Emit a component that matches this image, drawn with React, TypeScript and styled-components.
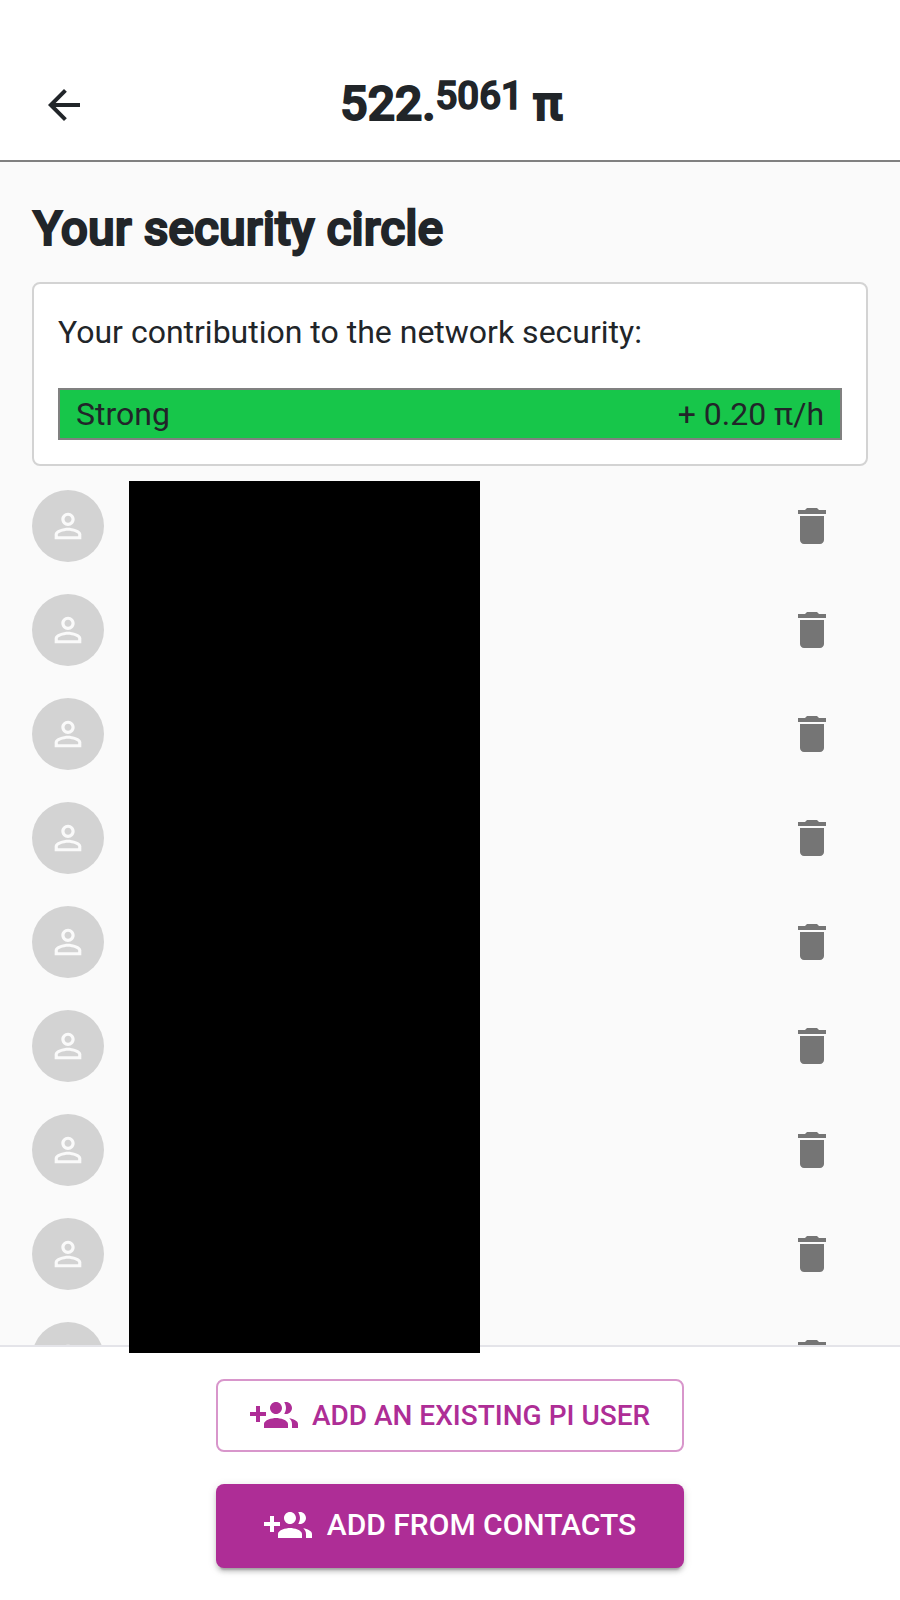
import React from "react";
import styled, { createGlobalStyle } from "styled-components";

const GlobalStyle = createGlobalStyle`
  *, *::before, *::after { box-sizing: border-box; }
  html, body { margin: 0; padding: 0; background: #fff; }
  body { font-family: Roboto, "Liberation Sans", sans-serif; color: #212529; }
`;

const Screen = styled.div`
  position: relative;
  display: flex;
  flex-direction: column;
  width: 900px;
  height: 1600px;
  overflow: hidden;
  background: #fff;
`;

const Header = styled.header`
  display: grid;
  grid-template-columns: 48px 1fr 48px;
  align-items: center;
  flex: none;
  height: 162px;
  padding: 50px 40px 0;
  border-bottom: 2px solid #808080;
`;

const BackButton = styled.button`
  display: flex;
  width: 48px;
  height: 48px;
  padding: 0;
  border: 0;
  background: none;
  color: inherit;
`;

const Balance = styled.h1`
  margin: 0 0 0 3px;
  padding-bottom: 2px;
  font-size: 48px;
  font-weight: 500;
  line-height: 60px;
  text-align: center;
  white-space: nowrap;
  word-spacing: -2px;
  -webkit-text-stroke: 2px currentColor;
`;

const Fraction = styled.span`
  display: inline-block;
  font-size: 0.8em;
  line-height: 40px;
  transform: translateY(-11px);
  -webkit-text-stroke-width: 1.6px;
`;

const Content = styled.main`
  flex: none;
  height: 1183px;
  padding: 38px 32px 0;
  overflow: hidden;
  background: #fafafa;
`;

const Heading = styled.h2`
  margin: 0 0 24px 1px;
  font-size: 48px;
  font-weight: 500;
  line-height: 58px;
  white-space: nowrap;
  -webkit-text-stroke: 2px currentColor;
`;

const Card = styled.section`
  height: 184px;
  margin-bottom: 8px;
  padding: 24px;
  border: 2px solid #d3d3d3;
  border-radius: 8px;
  background: #fff;
  font-size: 32px;
  white-space: nowrap;
`;

const CardLabel = styled.p`
  margin: 0 0 32px;
  line-height: 48px;
`;

const StrengthBar = styled.div`
  display: flex;
  align-items: center;
  justify-content: space-between;
  height: 52px;
  padding: 0 16px;
  border: 2px solid #808080;
  background: #17c64a;
`;

const Members = styled.ul`
  margin: 0;
  padding: 0;
  list-style: none;
`;

const MemberRow = styled.li`
  display: flex;
  align-items: center;
  justify-content: space-between;
  height: 104px;
  padding: 0 32px 0 0;
`;

const Avatar = styled.div`
  display: flex;
  align-items: center;
  justify-content: center;
  width: 72px;
  height: 72px;
  border-radius: 50%;
  background: #d3d3d3;
  color: #fafafa;
`;

const DeleteButton = styled.button`
  display: flex;
  padding: 0;
  border: 0;
  background: none;
  color: #757575;
`;

const Redaction = styled.div`
  position: absolute;
  left: 129px;
  top: 481px;
  width: 351px;
  height: 872px;
  background: #000;
`;

const Footer = styled.footer`
  display: flex;
  flex: 1;
  flex-direction: column;
  align-items: center;
  gap: 32px;
  padding-top: 32px;
  border-top: 2px solid #e4e4e9;
  background: #fff;
`;

const ActionButton = styled.button<{ $filled?: boolean }>`
  display: flex;
  align-items: center;
  justify-content: center;
  gap: ${(p) => (p.$filled ? 15 : 14)}px;
  width: 468px;
  height: ${(p) => (p.$filled ? 84 : 73)}px;
  padding: 0;
  border: ${(p) => (p.$filled ? "0" : "2px solid #d896cb")};
  border-radius: 8px;
  background: ${(p) => (p.$filled ? "#ae2d96" : "#fff")};
  color: ${(p) => (p.$filled ? "#fff" : "#ae2d96")};
  font-family: inherit;
  font-size: ${(p) => (p.$filled ? 30 : 28)}px;
  font-weight: 500;
  text-transform: uppercase;
  white-space: nowrap;
  box-shadow: ${(p) =>
    p.$filled
      ? "0 6px 2px -4px rgba(0,0,0,.2), 0 4px 4px rgba(0,0,0,.14), 0 2px 10px rgba(0,0,0,.12)"
      : "none"};
`;

const ActionLabel = styled.span<{ $raised?: boolean }>`
  padding-bottom: ${(p) => (p.$raised ? 3 : 0)}px;
`;

const Glyph = styled.svg<{ $size: number }>`
  display: block;
  flex: none;
  width: ${(p) => p.$size}px;
  height: ${(p) => p.$size}px;
  fill: currentColor;
`;

const paths = {
  back: "M20 11H7.83l5.59-5.59L12 4l-8 8 8 8 1.41-1.41L7.83 13H20v-2z",
  person:
    "M12 5.9c1.16 0 2.1.94 2.1 2.1s-.94 2.1-2.1 2.1S9.9 9.16 9.9 8s.94-2.1 2.1-2.1m0 9c2.97 0 6.1 1.46 6.1 2.1v1.1H5.9V17c0-.64 3.13-2.1 6.1-2.1M12 4C9.79 4 8 5.79 8 8s1.79 4 4 4 4-1.79 4-4-1.79-4-4-4zm0 9c-2.67 0-8 1.34-8 4v3h16v-3c0-2.66-5.33-4-8-4z",
  trash:
    "M6 19c0 1.1.9 2 2 2h8c1.1 0 2-.9 2-2V7H6v12zM19 4h-3.5l-1-1h-5l-1 1H5v2h14V4z",
  groupAdd:
    "M8 10H5V7H3v3H0v2h3v3h2v-3h3v-2zm10 1c1.66 0 2.99-1.34 2.99-3S19.66 5 18 5c-.32 0-.63.05-.91.14.57.81.9 1.79.9 2.86s-.34 2.04-.9 2.86c.28.09.59.14.91.14zm-5 0c1.66 0 2.99-1.34 2.99-3S14.66 5 13 5c-1.66 0-3 1.34-3 3s1.34 3 3 3zm6.62 2.16c.83.73 1.38 1.66 1.38 2.84v2h3v-2c0-1.54-2.37-2.49-4.38-2.84zM13 13c-2 0-6 1-6 3v2h12v-2c0-2-4-3-6-3z",
};

function Icon({ name, size = 48 }: { name: keyof typeof paths; size?: number }) {
  return (
    <Glyph $size={size} viewBox="0 0 24 24" aria-hidden="true">
      <path d={paths[name]} />
    </Glyph>
  );
}

const members = Array.from({ length: 9 }, (_, i) => i);

export default function App() {
  return (
    <Screen>
      <GlobalStyle />
      <Header>
        <BackButton aria-label="Back">
          <Icon name="back" />
        </BackButton>
        <Balance>
          522.<Fraction>5061</Fraction> π
        </Balance>
      </Header>
      <Content>
        <Heading>Your security circle</Heading>
        <Card>
          <CardLabel>Your contribution to the network security:</CardLabel>
          <StrengthBar>
            <span>Strong</span>
            <span>+ 0.20 π/h</span>
          </StrengthBar>
        </Card>
        <Members>
          {members.map((id) => (
            <MemberRow key={id}>
              <Avatar>
                <Icon name="person" size={40} />
              </Avatar>
              <DeleteButton aria-label="Remove">
                <Icon name="trash" />
              </DeleteButton>
            </MemberRow>
          ))}
        </Members>
      </Content>
      <Footer>
        <ActionButton>
          <Icon name="groupAdd" />
          <ActionLabel>Add an existing Pi user</ActionLabel>
        </ActionButton>
        <ActionButton $filled>
          <Icon name="groupAdd" />
          <ActionLabel $raised>Add from contacts</ActionLabel>
        </ActionButton>
      </Footer>
      <Redaction />
    </Screen>
  );
}
